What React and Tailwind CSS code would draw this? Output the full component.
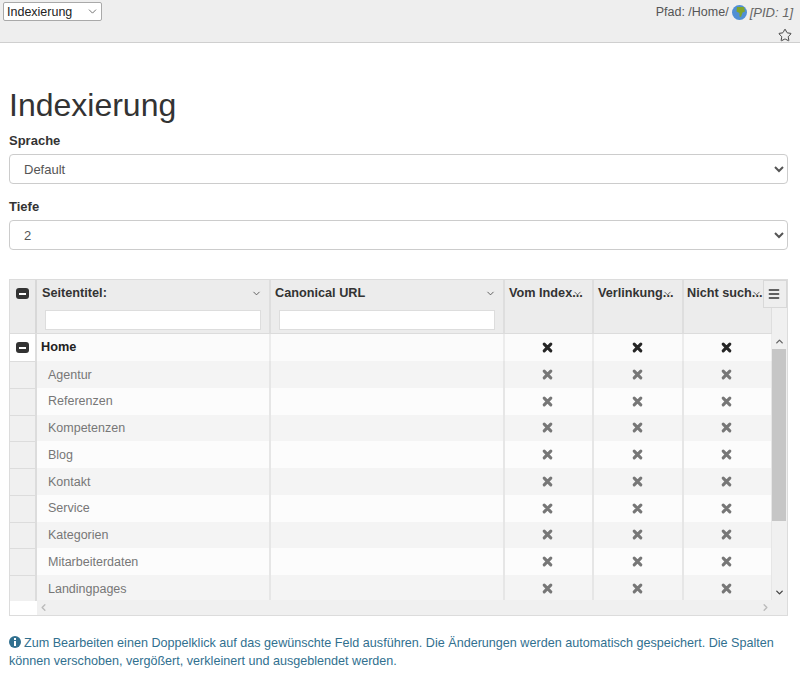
import { Star, Menu, ChevronDown, ChevronUp, ChevronLeft, ChevronRight } from "lucide-react";

const rows = ["Agentur", "Referenzen", "Kompetenzen", "Blog", "Kontakt", "Service", "Kategorien", "Mitarbeiterdaten", "Landingpages"];
const flags = ["Vom Index...", "Verlinkung...", "Nicht such..."];

const colsClass = "grid grid-cols-[27px_234px_234px_89px_90px_89px]";

function Cross({ dark }) {
  return (
    <svg width="11" height="11" viewBox="0 0 11 11" className={dark ? "text-[#262626]" : "text-[#777]"}>
      <path d="M2.200 2.200 L8.800 8.800 M8.800 2.200 L2.200 8.800" stroke="currentColor" strokeWidth="3.100" strokeLinecap="round" />
    </svg>
  );
}

function MinusBox() {
  return (
    <span className="flex h-[11px] w-[13px] items-center justify-center rounded-[3px] bg-[#333]">
      <span className="h-[2px] w-[7px] bg-white"></span>
    </span>
  );
}

function Globe() {
  return (
    <svg width="15" height="15" viewBox="0 0 15 15" className="mx-[3px]">
      <circle cx="7.500" cy="7.500" r="7.500" fill="#4f8fd4" />
      <path d="M5 2 L12 2 L13 6.500 L10.500 7.500 L9 12 L7.500 11.500 L7.500 8 L4.500 6.500 Z" fill="#7fa52c" />
    </svg>
  );
}

export default function App() {
  return (
    <div className="h-[679px] overflow-hidden bg-white font-['Liberation_Sans',Arial,sans-serif] text-[#333]">
      {/* Top bar */}
      <div className="flex h-[43px] justify-between border-b border-[#cfcfcf] bg-[#eeeeee] pl-[3px] pr-[7px] pt-[2px]">
        <div className="relative h-[19px] w-[99px]">
          <select className="block h-full w-full appearance-none rounded-[2px] border border-[#a9a9a9] bg-white pl-[3px] text-[12.500px] text-[#222]" defaultValue="Indexierung">
            <option>Indexierung</option>
          </select>
          <ChevronDown size={13} strokeWidth={1.500} className="absolute top-[3px] right-[3px] text-[#555]" />
        </div>
        <div className="flex flex-col items-end">
          <div className="mt-[1px] flex h-[20px] items-center text-[12.500px] text-[#555]">
            Pfad: /Home/ <Globe /> <i className="text-[13px] text-[#666]">[PID: 1]</i>
          </div>
          <Star size={16} strokeWidth={1.500} className="mt-[5px] text-[#333]" />
        </div>
      </div>

      <div className="px-[9px] pr-[12px]">
        <h1 className="mt-[42px] text-[32px] leading-[40px] font-normal">Indexierung</h1>

        <label className="mt-[7px] block text-[13px] leading-[18px] font-bold">Sprache</label>
        <select className="mt-[4px] block h-[30px] w-full rounded-[4px] border border-[#ccc] bg-white pl-[10px] text-[13px] text-[#555]" defaultValue="Default">
          <option>Default</option>
        </select>

        <label className="mt-[14px] block text-[13px] leading-[18px] font-bold">Tiefe</label>
        <select className="mt-[4px] block h-[30px] w-full rounded-[4px] border border-[#ccc] bg-white pl-[10px] text-[13px] text-[#555]" defaultValue="2">
          <option>2</option>
        </select>

        {/* Grid */}
        <div className="relative mt-[29px] h-[337px] overflow-hidden border border-[#dcdcdc] bg-white">
          <div className={`${colsClass} h-[54px] border-b border-[#dcdcdc] bg-[#ececec]`}>
            <div className="flex justify-center border-r-2 border-[#d8d8d8] pt-[8px]">
              <MinusBox />
            </div>
            {["Seitentitel:", "Canonical URL"].map((title, i) => (
              <div key={title} className={`border-r-2 border-[#dedede] pt-[6px] pr-[7px] ${i === 0 ? "pl-[5px]" : "pl-[4px]"}`}>
                <div className="flex items-center justify-between text-[12.700px] leading-[15px] font-bold">
                  {title}
                  <ChevronDown size={11} className="text-[#555]" />
                </div>
                <input className={`mt-[9px] block h-[20px] w-[216px] border border-[#ddd] bg-white ${i === 0 ? "ml-[3px]" : "ml-[4px]"}`} />
              </div>
            ))}
            {flags.map((title, i) => (
              <div key={title} className={`relative border-r-2 border-[#dedede] pt-[6px] text-[12.700px] leading-[15px] font-bold whitespace-nowrap ${i === 2 ? "pl-[3px]" : "pl-[4px]"}`}>
                {title}
                <ChevronDown size={11} className="absolute top-[8px] right-[9px] text-[#555]" />
              </div>
            ))}
          </div>

          <div className="h-[267px] overflow-hidden">
            <div className={`${colsClass} h-[27px] bg-[#fbfbfb]`}>
              <div className="flex items-center justify-center border-r-2 border-[#dedede] bg-white">
                <MinusBox />
              </div>
              <div className="flex items-center border-r-2 border-[#ececec] pl-[4px] pt-[1px] text-[12.700px] font-bold text-[#222]">Home</div>
              <div className="border-r-2 border-[#ececec]"></div>
              {flags.map((f) => (
                <div key={f} className="flex items-center justify-center border-r-2 border-[#ececec] pr-[2px]">
                  <Cross dark />
                </div>
              ))}
            </div>
            {rows.map((name, i) => (
              <div key={name} className={`${colsClass} h-[26.750px] ${i % 2 === 0 ? "bg-[#f4f4f4]" : "bg-[#fcfcfc]"}`}>
                <div className="border-t border-r-2 border-[#dcdcdc] bg-[#f0f0f0]"></div>
                <div className="flex items-center border-r-2 border-[#e6e6e6] pl-[11px] pt-[1px] text-[12.500px] text-[#777]">{name}</div>
                <div className="border-r-2 border-[#e6e6e6]"></div>
                {flags.map((f) => (
                  <div key={f} className="flex items-center justify-center border-r-2 border-[#e6e6e6] pr-[2px]">
                    <Cross />
                  </div>
                ))}
              </div>
            ))}
          </div>

          {/* Scrollbars over the grid edge */}
          <div className="absolute top-0 right-0 bottom-0 w-[15px] bg-[#f0f0f0]">
            <ChevronUp size={11} strokeWidth={3} className="absolute top-[56px] left-[2px] text-[#666]" />
            <div className="absolute top-[69px] left-0 h-[172px] w-[14px] bg-[#c6c6c6]"></div>
            <ChevronDown size={11} strokeWidth={3} className="absolute top-[307px] left-[2px] text-[#444]" />
          </div>
          <div className="absolute top-0 right-0 flex h-[28px] w-[24px] items-center border border-[#d8d8d8] bg-[#eeeeee] pl-[3px]">
            <Menu size={14} strokeWidth={2.500} className="text-[#333]" />
          </div>
          <div className="absolute right-[15px] bottom-0 left-[27px] h-[15px] bg-[#f0f0f0]">
            <ChevronLeft size={11} strokeWidth={3} className="absolute top-[2px] left-[1px] text-[#bbb]" />
            <ChevronRight size={11} strokeWidth={3} className="absolute top-[2px] right-[1px] text-[#bbb]" />
          </div>
        </div>

        <p className="mt-[18px] pr-[2px] text-[12.600px] leading-[18px] text-[#31708f]">
          <svg width="12" height="12" viewBox="0 0 12 12" className="mr-[3px] inline align-[-1px]">
            <circle cx="6" cy="6" r="6" fill="#31708f" />
            <rect x="5" y="2" width="2" height="2" fill="#fff" />
            <rect x="5" y="5" width="2" height="5" fill="#fff" />
          </svg>
          Zum Bearbeiten einen Doppelklick auf das gewünschte Feld ausführen. Die Änderungen werden automatisch gespeichert. Die Spalten können verschoben, vergößert, verkleinert und ausgeblendet werden.
        </p>
      </div>
    </div>
  );
}
